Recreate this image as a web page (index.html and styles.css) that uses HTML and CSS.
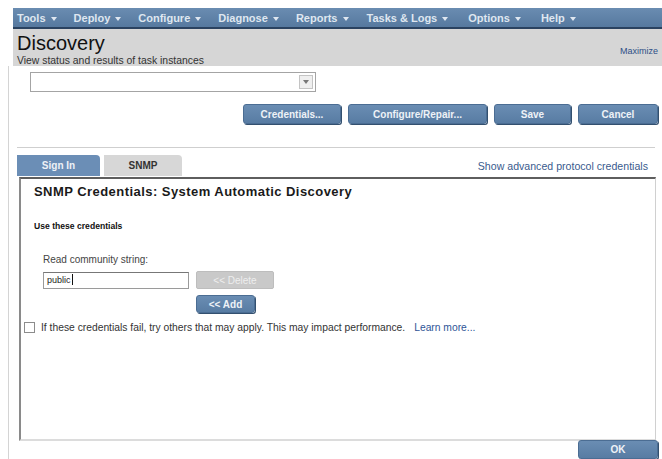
FILE: index.html
```html
<!DOCTYPE html>
<html lang="en">
<head>
    <meta charset="UTF-8">
    <meta name="viewport" content="width=device-width, initial-scale=1.0">
    <title>Discovery</title>
    <link rel="stylesheet" href="styles.css">
</head>
<body>
    <!-- main menu -->
    <div class="menubar">
        <span class="menu">Tools <i class="caret"></i></span>
        <span class="menu">Deploy <i class="caret"></i></span>
        <span class="menu">Configure <i class="caret"></i></span>
        <span class="menu">Diagnose <i class="caret"></i></span>
        <span class="menu">Reports <i class="caret"></i></span>
        <span class="menu">Tasks &amp; Logs <i class="caret"></i></span>
        <span class="menu">Options <i class="caret"></i></span>
        <span class="menu">Help <i class="caret"></i></span>
    </div>

    <!-- page title -->
    <div class="titlebar">
        <div>
            <h1>Discovery</h1>
            <p class="subtitle">View status and results of task instances</p>
        </div>
        <a class="maximize">Maximize</a>
    </div>

    <div class="content">
        <div class="task-select"><span class="select-arrow"></span></div>

        <div class="actions">
            <button class="btn btn-credentials">Credentials...</button>
            <button class="btn btn-repair">Configure/Repair...</button>
            <button class="btn btn-save">Save</button>
            <button class="btn btn-cancel">Cancel</button>
        </div>

        <div class="separator"></div>

        <div class="tabs-row">
            <div class="tabs">
                <span class="tab tab-signin">Sign In</span>
                <span class="tab tab-snmp">SNMP</span>
            </div>
            <a class="advanced">Show advanced protocol credentials</a>
        </div>

        <!-- snmp credentials panel -->
        <div class="panel">
            <h2>SNMP Credentials: System Automatic Discovery</h2>
            <h3>Use these credentials</h3>
            <div class="field-label">Read community string:</div>
            <div class="community-row">
                <div class="text-input">public<span class="cursor"></span></div>
                <button class="btn-disabled">&lt;&lt; Delete</button>
            </div>
            <button class="btn btn-add">&lt;&lt; Add</button>
            <div class="fallback">
                <span class="checkbox"></span>
                <span>If these credentials fail, try others that may apply. This may impact performance.</span>
                <a class="learn-more">Learn more...</a>
            </div>
        </div>

        <div class="footer">
            <button class="btn btn-ok">OK</button>
        </div>
    </div>
</body>
</html>
```

FILE: styles.css
```css
body{
    margin: 0;
    padding-top: 8px;
    background-color: #fff;
    font-family: "Liberation Sans", Arial, sans-serif;
    color: #222;
}

/* menu bar */
.menubar{
    margin-left: 13px;
    height: 19px;
    padding-left: 4px;
    display: flex;
    align-items: center;
    gap: 17px;
    background: linear-gradient(#6a8cb1, #56799f);
    border-bottom: 2px solid #2a4260;
}
.menu{
    color: #dfe7f0;
    font-size: 11px;
    font-weight: bold;
    white-space: nowrap;
}
.menu:nth-child(6){
    margin-left: 1px;
}
.menu:nth-child(n+7){
    margin-left: 3px;
}
.caret{
    display: inline-block;
    margin-left: 2px;
    vertical-align: middle;
    border-left: 3px solid transparent;
    border-right: 3px solid transparent;
    border-top: 4px solid #dfe7f0;
}

/* title */
.titlebar{
    margin-left: 13px;
    height: 37px;
    box-sizing: border-box;
    padding: 3px 4px 0 4px;
    display: flex;
    justify-content: space-between;
    background-color: #d6d6d6;
}
h1{
    margin: 0;
    font-size: 20px;
    font-weight: normal;
    line-height: 22px;
    color: #111;
}
.subtitle{
    margin: 1px 0 0 0;
    font-size: 10.4px;
    line-height: 11px;
    color: #333;
}
.maximize{
    margin-top: 14px;
    font-size: 9px;
    color: #2e4f86;
}

.content{
    margin-left: 8px;
    border-left: 1px solid #d4d4d4;
    padding: 6px 4px 1px 8px;
}

.task-select{
    margin-left: 13px;
    width: 286px;
    height: 20px;
    box-sizing: border-box;
    border: 1px solid #a4a4a4;
    display: flex;
    justify-content: flex-end;
    align-items: center;
    padding-right: 2px;
}
.select-arrow{
    width: 14px;
    height: 14px;
    box-sizing: border-box;
    border: 1px solid #c4c4c4;
    background-color: #efefef;
    display: flex;
    justify-content: center;
    align-items: center;
}
.select-arrow::after{
    content: "";
    border-left: 3px solid transparent;
    border-right: 3px solid transparent;
    border-top: 4px solid #777;
}

/* buttons */
.btn{
    height: 20px;
    padding: 0;
    font-family: inherit;
    font-size: 10px;
    font-weight: bold;
    color: #eef2f7;
    background: linear-gradient(#6a8db3, #587ca3);
    border: 1px solid #4b6d93;
    border-radius: 3px;
    box-shadow: 1px 1px 0 #33506f;
}
.actions{
    margin-top: 12px;
    display: flex;
    justify-content: flex-end;
    gap: 7px;
}
.btn-credentials{ width: 98px; }
.btn-repair{ width: 139px; }
.btn-save{ width: 77px; }
.btn-cancel{ width: 80px; }

.separator{
    margin: 23px 3px 0 0;
    border-top: 1px solid #cfcfcf;
}

/* tabs */
.tabs-row{
    margin-top: 7px;
    height: 21px;
    display: flex;
    justify-content: space-between;
    align-items: center;
}
.tabs{
    display: flex;
    gap: 4px;
    height: 100%;
}
.tab{
    display: flex;
    justify-content: center;
    align-items: center;
    font-size: 10px;
    font-weight: bold;
    border-radius: 0 4px 0 0;
}
.tab-signin{
    width: 83px;
    color: #eef2f7;
    background-color: #6b8eb6;
}
.tab-snmp{
    width: 78px;
    color: #333;
    background-color: #d7d7d7;
}
.advanced{
    margin-right: 10px;
    font-size: 10.6px;
    color: #3a5b8e;
}

/* credentials panel */
.panel{
    margin: 1px 2px 0 2px;
    height: 255px;
    padding: 5px 15px 0 13px;
    border-top: 2px solid #5e5e5e;
    border-left: 2px solid #8a8a8a;
    border-right: 1px solid #d0d0d0;
    border-bottom: 2px solid #dcdcdc;
}
h2{
    margin: 0;
    font-size: 13px;
    line-height: 16px;
    letter-spacing: 0.45px;
    color: #1a1a1a;
}
h3{
    margin: 20px 0 0 0;
    font-size: 8.6px;
    line-height: 12px;
    color: #111;
}
.field-label{
    margin: 22px 0 0 9px;
    font-size: 10px;
    line-height: 12px;
    color: #444;
}
.community-row{
    margin: 6px 0 0 9px;
    display: flex;
    gap: 7px;
}
.text-input{
    width: 146px;
    height: 17px;
    box-sizing: border-box;
    padding-left: 3px;
    border: 1px solid #9a9a9a;
    border-top-color: #777;
    font-size: 9px;
    line-height: 15px;
    color: #222;
}
.cursor{
    display: inline-block;
    width: 1px;
    height: 11px;
    margin-left: 1px;
    vertical-align: -2px;
    background-color: #111;
}
.btn-disabled{
    width: 78px;
    height: 18px;
    padding: 0;
    margin-top: -1px;
    font-family: inherit;
    font-size: 10px;
    color: #eee;
    background-color: #c9c9c9;
    border: 1px solid #bdbdbd;
    border-radius: 2px;
}
.btn-add{
    display: block;
    width: 59px;
    height: 18px;
    margin: 6px 0 0 162px;
}
.fallback{
    margin: 9px 0 0 -10px;
    display: flex;
    align-items: center;
    font-size: 10.3px;
    color: #333;
}
.checkbox{
    width: 9px;
    height: 9px;
    margin-right: 6px;
    border: 1px solid #8c8c8c;
    background-color: #fff;
}
.learn-more{
    margin-left: 9px;
    color: #2f5597;
}

.footer{
    display: flex;
    justify-content: flex-end;
    margin-top: -1px;
}
.btn-ok{
    width: 80px;
    height: 19px;
}
```
